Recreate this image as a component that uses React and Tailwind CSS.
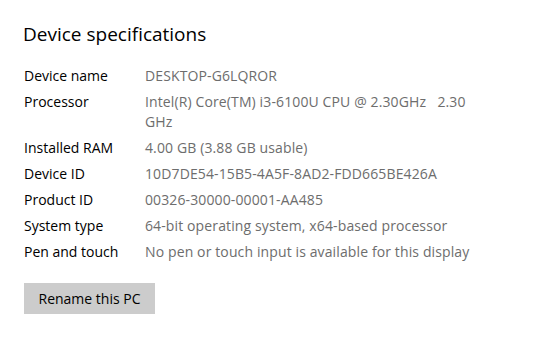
const specs = [
  { label: 'Device name', value: 'DESKTOP-G6LQROR' },
  { label: 'Processor', value: ['Intel(R) Core(TM) i3-6100U CPU @ 2.30GHz\u00a0\u00a0\u00a02.30', 'GHz'] },
  { label: 'Installed RAM', value: '4.00 GB (3.88 GB usable)' },
  { label: 'Device ID', value: '10D7DE54-15B5-4A5F-8AD2-FDD665BE426A' },
  { label: 'Product ID', value: '00326-30000-00001-AA485' },
  { label: 'System type', value: '64-bit operating system, x64-based processor' },
  { label: 'Pen and touch', value: 'No pen or touch input is available for this display' },
];

function App() {
  return (
    <div className="w-[553px] h-[338px] bg-white pl-6 pt-[21px] font-['Open_Sans',sans-serif]">
      <h2 className="text-[19px] leading-[26px] text-black -ml-px">Device specifications</h2>
      <div className="mt-[19px] flex flex-col gap-[6px] text-[14px] leading-5">
        {specs.map((s) => (
          <div key={s.label} className="flex">
            <div className="w-[121px] shrink-0 text-black">{s.label}</div>
            <div className="text-[#6d6d6d] tracking-[0.12px]">
              {Array.isArray(s.value) ? s.value.map((v) => <div key={v}>{v}</div>) : s.value}
            </div>
          </div>
        ))}
      </div>
      <button className="mt-[21px] w-[131px] h-[31px] bg-[#cccccc] text-[14px] text-black">
        Rename this PC
      </button>
    </div>
  );
}

export default App;
